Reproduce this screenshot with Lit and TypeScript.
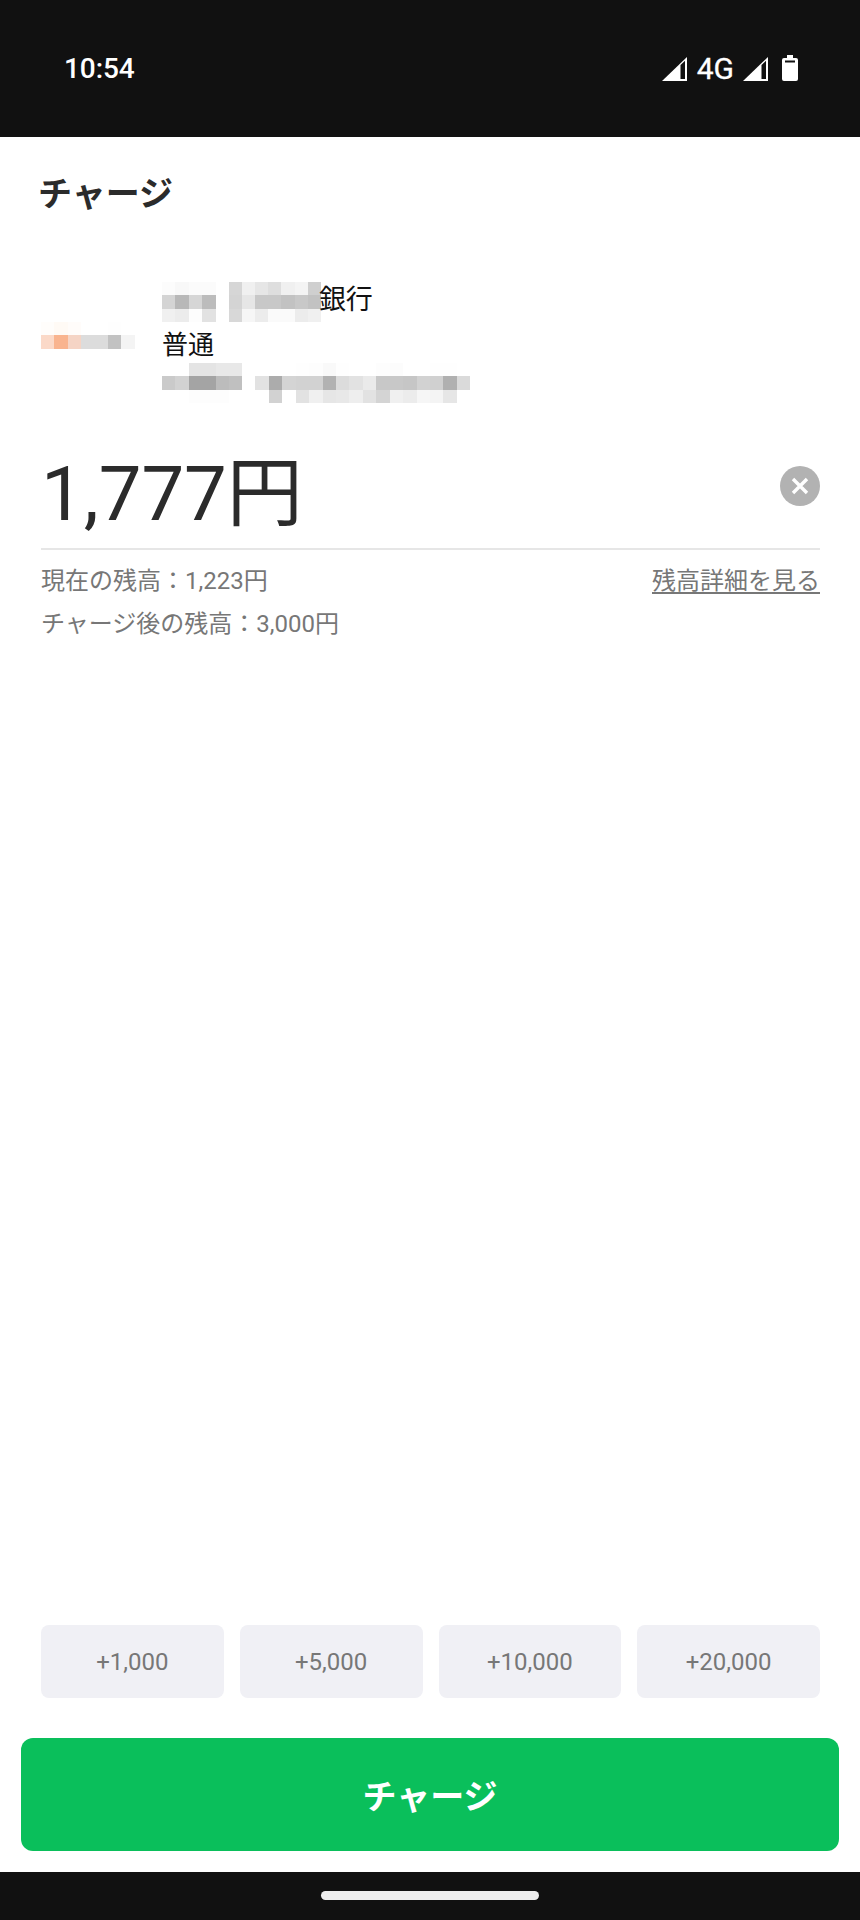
import { LitElement, html, css, svg } from "lit";
import { customElement } from "lit/decorators.js";

type Grid = string[][];

const LOGO: Grid = [
  ["fffdfb", "fffaf5", "fffcfa", "ffffff", "ffffff", "fefefe", "ffffff"],
  ["fbd9c8", "f9b48f", "f5d4c5", "dcdcdc", "dcdcdc", "c2c2c2", "f4f4f4"],
];
const BANK_A: Grid = [
  ["fcfcfc", "f8f8f8", "fbfbfb", "fbfbfb"],
  ["d4d4d4", "b8b8b8", "d6d6d6", "bcbcbc"],
  ["f0f0f0", "ececec", "fdfdfd", "e2e2e2"],
];
const BANK_B: Grid = [
  ["d6d6d6", "f0f0f0", "e6e6e6", "dedede", "f0f0f0", "f4f4f4", "cfcfcf"],
  ["d4d4d4", "e6e6e6", "c8c8c8", "c8c8c8", "c2c2c2", "c8c8c8", "c2c2c2"],
  ["d8d8d8", "f6f6f6", "ececec", "fafafa", "fafafa", "ececec", "f0f0f0"],
];
const ACC_A: Grid = [
  ["ffffff", "ffffff", "e4e4e4", "e4e4e4", "e8e8e8", "e8e8e8"],
  ["cacaca", "d2d2d2", "a4a4a4", "a4a4a4", "bcbcbc", "c0c0c0"],
  ["ffffff", "ffffff", "fdfdfd", "fdfdfd", "fdfdfd", "ffffff"],
];
const ACC_B: Grid = [
  ["ffffff", "ffffff", "ffffff", "fefefe", "fdfdfd", "f9f9f9", "fefefe", "ffffff", "ffffff", "fdfdfd", "fcfcfc", "ffffff", "ffffff", "fefefe", "fefefe", "ffffff"],
  ["e2e2e2", "acacac", "d4d4d4", "d2d2d2", "d2d2d2", "b2b2b2", "dcdcdc", "e2e2e2", "eaeaea", "c8c8c8", "c8c8c8", "c6c6c6", "d2d2d2", "d0d0d0", "b0b0b0", "dadada"],
  ["ffffff", "d2d2d2", "ffffff", "e2e2e2", "f0f0f0", "e6e6e6", "e8e8e8", "eeeeee", "e2e2e2", "d4d4d4", "f0f0f0", "ececec", "f6f6f6", "f4f4f4", "e6e6e6", "ffffff"],
];

const signal = svg`<polygon fill="#fff" points="0,24 25,0 25,24" /><polygon fill="#111" points="18.5,8 23,3.8 23,22 18.5,22" />`;

@customElement("app-root")
export class AppRoot extends LitElement {
  static styles = css`
    :host {
      display: block;
      width: 860px;
      height: 1920px;
      font-family: Roboto, "Noto Sans CJK JP", sans-serif;
      background: #fff;
    }
    .screen {
      display: flex;
      flex-direction: column;
      height: 1920px;
    }
    .status {
      flex: none;
      height: 137px;
      background: #111;
      color: #fff;
      display: flex;
      align-items: center;
      justify-content: space-between;
      padding: 0 62px 0 64px;
      box-sizing: border-box;
    }
    .time {
      font-size: 28px;
      font-weight: 500;
      line-height: 32px;
      margin-top: 1px;
      letter-spacing: -0.1px;
    }
    .icons {
      display: flex;
      align-items: flex-end;
      height: 26px;
      margin-bottom: 1px;
    }
    .icons svg {
      display: block;
    }
    .net {
      font-size: 30px;
      font-weight: 400;
      line-height: 24px;
      margin: 0 9px 0 10px;
      -webkit-text-stroke: 0.3px #fff;
    }
    .batt {
      margin-left: 14px;
    }
    .main {
      flex: 1;
      display: flex;
      flex-direction: column;
      padding: 36px 40px 0 41px;
      min-height: 0;
    }
    .title {
      font-size: 34px;
      font-weight: 700;
      line-height: 40px;
      color: #2b2b2b;
      margin: 1px 0 68px -3px;
    }
    .account {
      display: flex;
      align-items: flex-start;
      height: 122px;
    }
    .logo {
      width: 121px;
      flex: none;
      margin-top: 40px;
    }
    .info {
      display: flex;
      flex-direction: column;
    }
    .line {
      display: flex;
      align-items: center;
      font-size: 26px;
      color: #111;
      line-height: 40px;
      height: 40px;
    }
    .line.mid {
      height: 41px;
      padding-top: 4px;
      box-sizing: border-box;
    }
    .bank {
      font-size: 27px;
      margin: -4px 0 0 -2px;
    }
    .mosaic {
      display: grid;
      flex: none;
    }
    .mosaic.gap {
      margin-left: 13px;
    }
    .amount {
      display: flex;
      align-items: center;
      justify-content: space-between;
      height: 90px;
      margin-top: 38px;
    }
    .value {
      font-size: 76px;
      line-height: 90px;
      color: #2b2b2b;
      margin-top: 14px;
    }
    .clear {
      width: 40px;
      height: 40px;
      border-radius: 50%;
      background: #b2b2b2;
      display: flex;
      align-items: center;
      justify-content: center;
      margin: -2px 0 0;
    }
    .rule {
      height: 2px;
      background: #e6e6e6;
      margin-top: 16px;
    }
    .meta {
      display: flex;
      justify-content: space-between;
      font-size: 24px;
      line-height: 43px;
      color: #777;
      margin-top: 10px;
    }
    .link {
      text-decoration: underline;
      text-underline-offset: 3px;
    }
    .note {
      font-size: 24px;
      line-height: 43px;
      color: #777;
    }
    .quick {
      margin-top: auto;
      display: grid;
      grid-template-columns: repeat(4, 1fr);
      gap: 16px;
    }
    .chip {
      height: 73px;
      border-radius: 8px;
      background: #f0f0f5;
      color: #777;
      font-size: 24px;
      display: flex;
      align-items: center;
      justify-content: center;
    }
    .cta {
      flex: none;
      height: 113px;
      margin: 40px 21px 21px;
      background: #0abf5b;
      border-radius: 12px;
      color: #fff;
      font-size: 34px;
      font-weight: 700;
      display: flex;
      align-items: center;
      justify-content: center;
    }
    .nav {
      flex: none;
      height: 48px;
      background: #111;
      display: flex;
      justify-content: center;
      padding-top: 19px;
      box-sizing: border-box;
    }
    .pill {
      width: 218px;
      height: 9px;
      border-radius: 5px;
      background: #eee;
    }
  `;

  private mosaic(grid: Grid, gap = false, cell = 13.4) {
    const cols = grid[0].length;
    const tpl = `grid-template-columns:repeat(${cols},${cell}px);grid-auto-rows:13.4px`;
    return html`<div class="mosaic ${gap ? "gap" : ""}" style=${tpl}>
      ${grid.flat().map((c) => html`<div style="background:#${c}"></div>`)}
    </div>`;
  }

  render() {
    return html`
      <div class="screen">
        <div class="status">
          <div class="time">10:54</div>
          <div class="icons">
            <svg width="25" height="24" viewBox="0 0 25 24">${signal}</svg>
            <span class="net">4G</span>
            <svg width="25" height="24" viewBox="0 0 25 24">${signal}</svg>
            <svg class="batt" width="16" height="26" viewBox="0 0 16 26">
              <path fill="#fff" d="M5 0h6v3h3a2 2 0 0 1 2 2v19a2 2 0 0 1-2 2H2a2 2 0 0 1-2-2V5a2 2 0 0 1 2-2h3z" />
              <rect x="3" y="5.5" width="10" height="2" fill="#111" />
            </svg>
          </div>
        </div>
        <div class="main">
          <div class="title">チャージ</div>
          <div class="account">
            <div class="logo">${this.mosaic(LOGO)}</div>
            <div class="info">
              <div class="line">${this.mosaic(BANK_A)}${this.mosaic(BANK_B, true, 13.2)}<span class="bank">銀行</span></div>
              <div class="line mid">普通</div>
              <div class="line">${this.mosaic(ACC_A)}${this.mosaic(ACC_B, true, 13.44)}</div>
            </div>
          </div>
          <div class="amount">
            <div class="value">1,777円</div>
            <div class="clear">
              <svg width="18" height="18" viewBox="0 0 18 18">
                <path d="M2 2l14 14M16 2L2 16" stroke="#fff" stroke-width="3.4" fill="none" />
              </svg>
            </div>
          </div>
          <div class="rule"></div>
          <div class="meta"><span>現在の残高：1,223円</span><span class="link">残高詳細を見る</span></div>
          <div class="note">チャージ後の残高：3,000円</div>
          <div class="quick">
            ${["+1,000", "+5,000", "+10,000", "+20,000"].map((t) => html`<div class="chip">${t}</div>`)}
          </div>
        </div>
        <div class="cta">チャージ</div>
        <div class="nav"><div class="pill"></div></div>
      </div>
    `;
  }
}
